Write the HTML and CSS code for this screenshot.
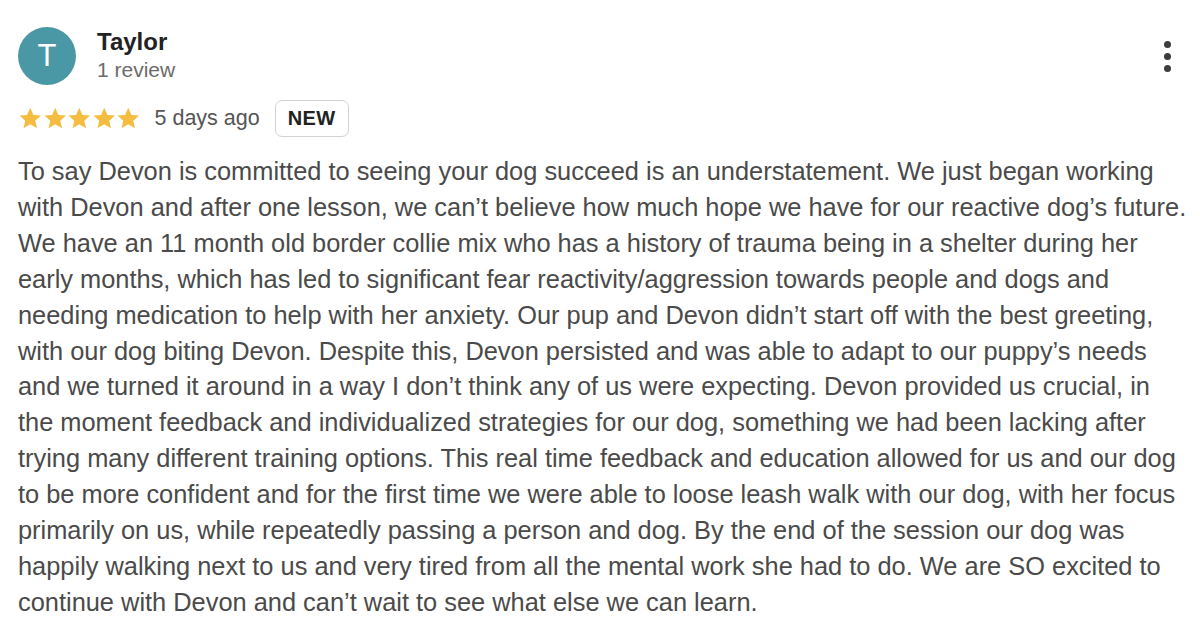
FILE: index.html
```html
<!DOCTYPE html>
<html>
<head>
<meta charset="utf-8">
<link rel="stylesheet" href="styles.css">
</head>
<body>
<div class="review">
  <div class="header">
    <div class="avatar">T</div>
    <div class="who">
      <div class="name">Taylor</div>
      <div class="count">1 review</div>
    </div>
    <div class="menu" aria-label="More">
      <span class="dot"></span><span class="dot"></span><span class="dot"></span>
    </div>
  </div>
  <div class="meta">
    <div class="stars">
      <svg viewBox="0 0 24 24" class="star"><path d="M12 1.8l3.1 6.9 7.4.7-5.6 5 1.7 7.4L12 17.9l-6.6 3.9 1.7-7.4-5.6-5 7.4-.7z"/></svg>
      <svg viewBox="0 0 24 24" class="star"><path d="M12 1.8l3.1 6.9 7.4.7-5.6 5 1.7 7.4L12 17.9l-6.6 3.9 1.7-7.4-5.6-5 7.4-.7z"/></svg>
      <svg viewBox="0 0 24 24" class="star"><path d="M12 1.8l3.1 6.9 7.4.7-5.6 5 1.7 7.4L12 17.9l-6.6 3.9 1.7-7.4-5.6-5 7.4-.7z"/></svg>
      <svg viewBox="0 0 24 24" class="star"><path d="M12 1.8l3.1 6.9 7.4.7-5.6 5 1.7 7.4L12 17.9l-6.6 3.9 1.7-7.4-5.6-5 7.4-.7z"/></svg>
      <svg viewBox="0 0 24 24" class="star"><path d="M12 1.8l3.1 6.9 7.4.7-5.6 5 1.7 7.4L12 17.9l-6.6 3.9 1.7-7.4-5.6-5 7.4-.7z"/></svg>
    </div>
    <span class="date">5 days ago</span>
    <span class="badge">NEW</span>
  </div>
  <p class="text">To say Devon is committed to seeing your dog succeed is an understatement. We just began working with Devon and after one lesson, we can’t believe how much hope we have for our reactive dog’s future. We have an 11 month old border collie mix who has a history of trauma being in a shelter during her early months, which has led to significant fear reactivity/aggression towards people and dogs and needing medication to help with her anxiety. Our pup and Devon didn’t start off with the best greeting, with our dog biting Devon. Despite this, Devon persisted and was able to adapt to our puppy’s needs and we turned it around in a way I don’t think any of us were expecting. Devon provided us crucial, in the moment feedback and individualized strategies for our dog, something we had been lacking after trying many different training options. This real time feedback and education allowed for us and our dog to be more confident and for the first time we were able to loose leash walk with our dog, with her focus primarily on us, while repeatedly passing a person and dog. By the end of the session our dog was happily walking next to us and very tired from all the mental work she had to do. We are SO excited to continue with Devon and can’t wait to see what else we can learn.</p>
</div>
</body>
</html>
```

FILE: styles.css
```css
html, body {
  margin: 0;
  padding: 0;
  background: #ffffff;
}
body {
  font-family: "Liberation Sans", Arial, Helvetica, sans-serif;
  color: #4a4a4a;
}
.review {
  padding: 27px 29px 0 18px;
  width: 1200px;
  box-sizing: border-box;
}
.header {
  display: flex;
  align-items: flex-start;
}
.avatar {
  width: 58px;
  height: 58px;
  border-radius: 50%;
  background: #4a97a5;
  color: #ffffff;
  font-size: 31px;
  font-weight: 300;
  display: flex;
  align-items: center;
  justify-content: center;
  flex-shrink: 0;
}
.who {
  margin-left: 21px;
  padding-top: 1px;
  flex: 1;
}
.name {
  font-size: 24px;
  font-weight: 700;
  color: #222222;
  line-height: 28px;
}
.count {
  font-size: 21px;
  color: #6b6b6b;
  line-height: 26px;
  margin-top: 1px;
}
.menu {
  display: flex;
  flex-direction: column;
  gap: 5px;
  margin-top: 14px;
}
.dot {
  width: 7px;
  height: 7px;
  border-radius: 50%;
  background: #3c3c3c;
}
.meta {
  display: flex;
  align-items: center;
  margin-top: 15px;
}
.stars {
  display: flex;
  gap: 0;
}
.star {
  width: 24.5px;
  height: 24.5px;
  fill: #f4bd41;
}
.date {
  font-size: 21.5px;
  color: #555555;
  margin-left: 14px;
}
.badge {
  margin-left: 15px;
  border: 1px solid #d2d2d2;
  border-radius: 7px;
  padding: 0 12px;
  height: 37px;
  box-sizing: border-box;
  display: flex;
  align-items: center;
  font-size: 20px;
  font-weight: 700;
  color: #222222;
  letter-spacing: 0.4px;
}
.text {
  margin: 17px 0 0 0;
  font-size: 25.4px;
  line-height: 35.9px;
  color: #4a4a4a;
  width: 1172px;
}
```
